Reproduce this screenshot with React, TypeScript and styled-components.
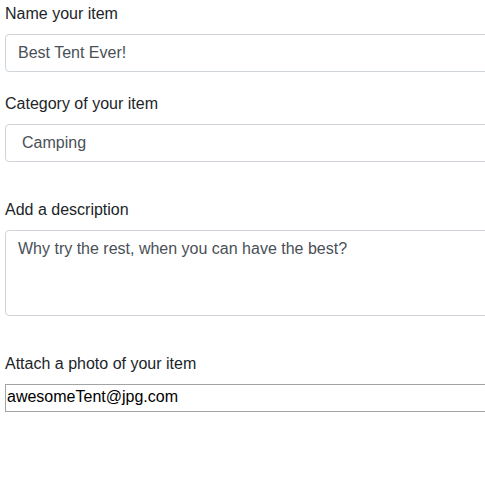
import React from "react";
import styled, { createGlobalStyle } from "styled-components";

const Global = createGlobalStyle`
  html, body {
    margin: 0;
    padding: 0;
    background: #ffffff;
    overflow: hidden;
  }
  body {
    font-family: "Liberation Sans", Arial, sans-serif;
    font-size: 16px;
    line-height: 1.5;
    color: #212529;
  }
  *, *::before, *::after { box-sizing: border-box; }
`;

const Form = styled.form`
  display: flex;
  flex-direction: column;
  width: 560px;
  padding: 2px 0 0 5px;
`;

const Group = styled.div<{ $space: number }>`
  display: flex;
  flex-direction: column;
  margin-bottom: ${(p) => p.$space}px;
`;

const Label = styled.label`
  display: block;
  font-size: 16px;
  line-height: 24px;
  color: #212529;
  margin-bottom: 8px;
`;

const controlBase = `
  display: block;
  width: 100%;
  font-family: "Liberation Sans", Arial, sans-serif;
  font-size: 16px;
  line-height: 24px;
  color: #495057;
  background: #ffffff;
  border: 1px solid #ced4da;
  border-radius: 4px;
  outline: none;
  margin: 0;
`;

const TextInput = styled.input`
  ${controlBase}
  height: 38px;
  padding: 6px 12px;
`;

const Select = styled.select`
  ${controlBase}
  height: 38px;
  padding: 6px 12px 6px 16px;
  appearance: none;
  -webkit-appearance: none;
`;

const TextArea = styled.textarea`
  ${controlBase}
  height: 86px;
  padding: 6px 12px;
  resize: none;
  overflow: auto;
`;

const PlainInput = styled.input`
  display: block;
  width: 100%;
  height: 28px;
  font-family: "Liberation Sans", Arial, sans-serif;
  font-size: 16px;
  line-height: 24px;
  color: #000000;
  background: #ffffff;
  border: 1px solid #a3a3a3;
  border-radius: 0;
  padding: 0 1px 2px 1px;
  margin: 0;
  outline: none;
`;

export default function App() {
  return (
    <>
      <Global />
      <Form onSubmit={(e) => e.preventDefault()}>
        <Group $space={20}>
          <Label htmlFor="name">Name your item</Label>
          <TextInput id="name" type="text" defaultValue="Best Tent Ever!" />
        </Group>
        <Group $space={36}>
          <Label htmlFor="category">Category of your item</Label>
          <Select id="category" defaultValue="Camping">
            <option>Camping</option>
            <option>Hiking</option>
            <option>Fishing</option>
          </Select>
        </Group>
        <Group $space={36}>
          <Label htmlFor="description">Add a description</Label>
          <TextArea
            id="description"
            defaultValue="Why try the rest, when you can have the best?"
          />
        </Group>
        <Group $space={0}>
          <Label htmlFor="photo">Attach a photo of your item</Label>
          <PlainInput id="photo" type="text" defaultValue="awesomeTent@jpg.com" />
        </Group>
      </Form>
    </>
  );
}
